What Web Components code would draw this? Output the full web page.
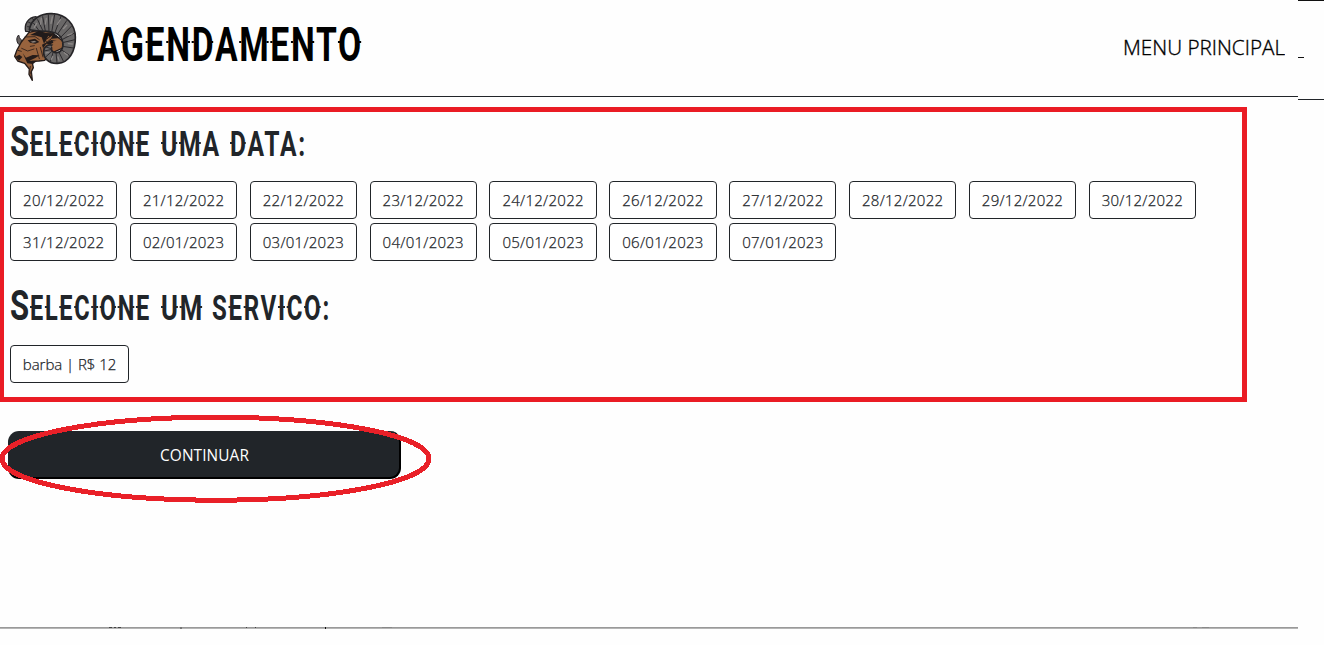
<!DOCTYPE html>
<html lang="pt-BR">
<head>
<meta charset="utf-8">
<title>Agendamento</title>
<style>
html,body{margin:0;background:#fefefe;overflow:hidden}
body{font-family:"Open Sans","Noto Sans",sans-serif;color:#212529}
</style>
</head>
<body>
<booking-page></booking-page>
<script>
const define = (name, html, setup) => customElements.define(name, class extends HTMLElement {
  constructor() {
    super();
    this.attachShadow({mode: 'open'}).innerHTML = html;
  }
  connectedCallback() { if (setup) setup(this, this.shadowRoot); }
});

define('ram-logo', `<style>:host{display:block;width:100px;height:96px}svg{display:block}</style>
<svg width="100" height="96" viewBox="0 0 300 288" stroke-linejoin="round" stroke-linecap="round">
<path d="M77 94C72 73 84 52 108 50L119 59 99 76 88 95Z" fill="#646262" stroke="#252326" stroke-width="4"/>
<path d="M83 80l15 3M86 67l17 7M97 56l12 9" stroke="#29272a" stroke-width="3" fill="none"/>
<path d="M60 136C49 130 47 113 56 105C58 118 66 120 70 126Z" fill="#66605f" stroke="#252326" stroke-width="3"/>
<path d="M87 97L117 90 157 98 187 122 191 143 158 158 134 181 117 183 96 184 100 203 94 215 97 241 87 223 88 207 74 190 53 183 44 169 50 152 64 126Z" fill="#98633d" stroke="#241b19" stroke-width="4"/>
<path d="M156 96C127 91 101 96 88 88C95 55 126 38 158 41C199 43 226 74 226 112C227 153 207 189 173 190C147 192 129 174 131 153C132 139 144 132 158 136C151 147 154 157 168 158C183 159 192 143 188 126C184 109 173 99 156 96Z" fill="#696767" stroke="#252427" stroke-width="5"/>
<path d="M101 70l16 22M113 59l16 34M128 50l8 43M145 44l2 51M164 44l-9 53M183 49l-19 51M200 62l-29 43M214 79l-35 36M224 99l-40 21M225 119l-38 9M220 144l-33-5M208 166l-24-17M190 183l-13-26M171 188l-3-30M151 184l9-29M137 171l18-16M132 153l20-4M138 141l16 5" fill="none" stroke="#2c2a2d" stroke-width="3"/>
<path d="M103 82l7-12M122 72l2-17M136 72l3-17M153 70l4-19M172 73l9-14M190 86l10-10M203 106l13-5M205 131l12 1M193 158l9 7M174 171l3 10M158 170l-4 8M145 157l-7 2" fill="none" stroke="#8c8887" stroke-width="4"/>
<path d="M117 92L138 99 160 100 181 114 154 116 145 107 132 131 125 112 109 107 90 105ZM126 134L154 120 171 123 151 133 139 131 129 145Z" fill="#211b1b"/>
<path d="M158 124L176 122 185 126 183 140 174 148 160 146 155 139 162 132Z" fill="#98633d"/>
<path d="M137 119L160 103 155 115 141 127Z" fill="#9b643d" stroke="#241b19" stroke-width="3"/>
<path d="M83 121L105 116 118 126 106 131 90 128ZM46 170L58 164 67 171 57 182ZM68 159L78 173 98 165 119 166 106 174 88 182 111 183 99 192 82 190Z" fill="#241b19"/>
<path d="M75 111L105 110 118 119M65 145L83 153 102 147M121 142l8 29M109 145l9 31M91 139l12-2M54 151l10 3M91 199l-2 14 5 12" fill="none" stroke="#3d291f" stroke-width="3"/>
<path d="M91 125l12-3 7 4-12 2Z" fill="#89807a"/>
</svg>`);

// Fits its text to a given width, and draws small spurs at the stems' mid-height.
define('fit-word', `<style>
:host{display:block;position:relative;height:40px;font-family:Roboto,"Liberation Sans",sans-serif;font-weight:700}
span{display:inline-block;white-space:nowrap;transform-origin:0 0;line-height:40px;letter-spacing:2.4px;margin-left:1px}
svg{position:absolute;left:0;top:0;overflow:visible;pointer-events:none}
path{stroke:currentColor;stroke-width:2;fill:none}
</style><span></span><svg width="1" height="1"><path/></svg>`, (host, root) => {
  const span = root.querySelector('span');
  const word = host.getAttribute('word');
  const width = +host.getAttribute('width'), size = +host.getAttribute('size'), base = +host.getAttribute('base');
  host.style.width = width + 'px';
  span.style.fontSize = size + 'px';
  span.textContent = word;
  // Roboto's baseline inside a 40px line box is 20 + 0.3418em from the top.
  const shift = base - (20 + size * 0.3418);
  const scale = width / (span.getBoundingClientRect().width - 1.2);
  span.style.transform = 'translateY(' + shift + 'px) scaleX(' + scale + ')';
  const left = host.getBoundingClientRect().left;
  const y = Math.round(base - size * 0.39);
  const gap = 2.4 * scale;
  let d = '';
  [...word].forEach((c, i) => {
    const r = document.createRange();
    r.setStart(span.firstChild, i); r.setEnd(span.firstChild, i + 1);
    const b = r.getBoundingClientRect();
    if ('GENDMOLCIUR'.includes(c)) d += 'M' + (b.left - left) + ' ' + y + 'h2.2';
    if ('NDMOIU'.includes(c)) d += 'M' + (b.right - left - gap - 2.2) + ' ' + y + 'h2.2';
  });
  root.querySelector('path').setAttribute('d', d);
});

define('display-title', `<style>
:host{display:flex;height:40px}
</style>`, (host, root) => {
  // Each entry: text, width, font size, gap before it.
  const sets = {
    page: [['AGENDAMENTO', 265, 47.5, 0]],
    data: [['S', 20, 43, -1], ['ELECIONE', 120, 34.5, 0], ['UMA', 59, 34.5, 11], ['DATA:', 76, 34.5, 10]],
    servico: [['S', 20, 43, -1], ['ELECIONE', 120, 34.5, 0], ['UM', 42, 34.5, 11], ['SERVICO:', 118, 34.5, 9]]
  };
  const kind = host.getAttribute('kind');
  for (const [word, width, size, gap] of sets[kind]) {
    const el = document.createElement('fit-word');
    el.setAttribute('word', word);
    el.setAttribute('width', width);
    el.setAttribute('size', size);
    el.setAttribute('base', kind === 'page' ? 39 : 35);
    el.style.marginLeft = gap + 'px';
    root.append(el);
  }
});

define('main-header', `<style>
:host{display:flex;box-sizing:border-box;height:97px;border-bottom:1px solid #212529;align-items:flex-start;color:#000}
display-title{margin:22px 0 0 -4px}
nav{margin:33px 13px 0 auto}
svg{display:block}
</style><ram-logo></ram-logo><display-title kind="page"></display-title>
<nav><svg width="162" height="28"><text x="0" y="22" textLength="162" lengthAdjust="spacingAndGlyphs" font-size="20.3" font-weight="300" fill="#000" stroke="#000" stroke-width=".35">MENU PRINCIPAL</text></svg></nav>`);

define('edge-strip', `<style>
:host{display:block;box-sizing:border-box;height:100px;border-top:1px solid #111;border-bottom:1px solid #212529;padding-top:56px}
i{display:block;width:6px;height:1px;background:#111}
</style><i></i>`);

define('option-button', `<style>
:host{display:block}
button{display:block;box-sizing:border-box;width:100%;height:38px;padding:0;border:1px solid #212529;border-radius:4px;background:#fff;color:#212529;font:300 15px/36px "Open Sans","Noto Sans",sans-serif;letter-spacing:var(--track,.26px);-webkit-text-stroke:.25px #212529;white-space:nowrap}
</style><button type="button"><slot></slot></button>`);

define('selection-panel', `<style>
:host{display:block;box-sizing:border-box;width:1247px;height:295px;margin-top:10px;border:5px solid #ea1c24;border-left-width:4px;padding:9px 0 0 6px}
.dates{display:grid;grid-template-columns:repeat(10,107.3px);gap:4px 12.56px;margin:20px 0 0 .1px}
.services{width:119px;margin-top:20px;--track:-.05px}
.second{margin-top:24px}
</style>
<display-title kind="data"></display-title>
<div class="dates"></div>
<display-title class="second" kind="servico"></display-title>
<div class="services"><option-button>barba | R$ 12</option-button></div>`, (host, root) => {
  const dates = '20/12/2022 21/12/2022 22/12/2022 23/12/2022 24/12/2022 26/12/2022 27/12/2022 28/12/2022 29/12/2022 30/12/2022 31/12/2022 02/01/2023 03/01/2023 04/01/2023 05/01/2023 06/01/2023 07/01/2023'.split(' ');
  root.querySelector('.dates').innerHTML = dates.map(d => '<option-button>'+d+'</option-button>').join('');
});

define('continue-action', `<style>
:host{display:block;position:relative;height:90px;padding:29px 0 0 8px;box-sizing:border-box}
button{display:block;box-sizing:border-box;width:393px;height:48px;border:0;border-right:2px solid #000;border-bottom:2px solid #000;border-radius:11px;background:#212529;color:#fff;padding:3px 0 0 2px;font:15.4px/43px "Open Sans","Noto Sans",sans-serif;letter-spacing:.1px}
svg{position:absolute;left:0;top:12px;overflow:visible}
</style><button type="button">CONTINUAR</button>
<svg width="432" height="90"><ellipse cx="215.5" cy="44.7" rx="213.5" ry="41.5" fill="none" stroke="#e92028" stroke-width="5" shape-rendering="crispEdges"/></svg>`);

define('page-rule', `<style>
:host{display:block;height:2px;margin-top:135px;background:linear-gradient(#999 50%,#b5b5b5 50%)}
svg{display:block}
</style><svg width="1298" height="2"><path d="M109 .5h3m2 0h2m2 0h3M246 .5h1m8 0h1" stroke="#444"/><path d="M180 1h2" stroke="#777" stroke-width="2"/><path d="M325 1h1" stroke="#111" stroke-width="2"/><path d="M382 .5h10M1193 .5h4m5 0h7" stroke="#888"/></svg>`);

define('booking-page', `<style>
:host{display:grid;grid-template-columns:1298px 26px;height:645px;align-items:start}
</style>
<main><main-header></main-header><selection-panel></selection-panel><continue-action></continue-action><page-rule></page-rule></main>
<edge-strip></edge-strip>`);
</script>
</body>
</html>
